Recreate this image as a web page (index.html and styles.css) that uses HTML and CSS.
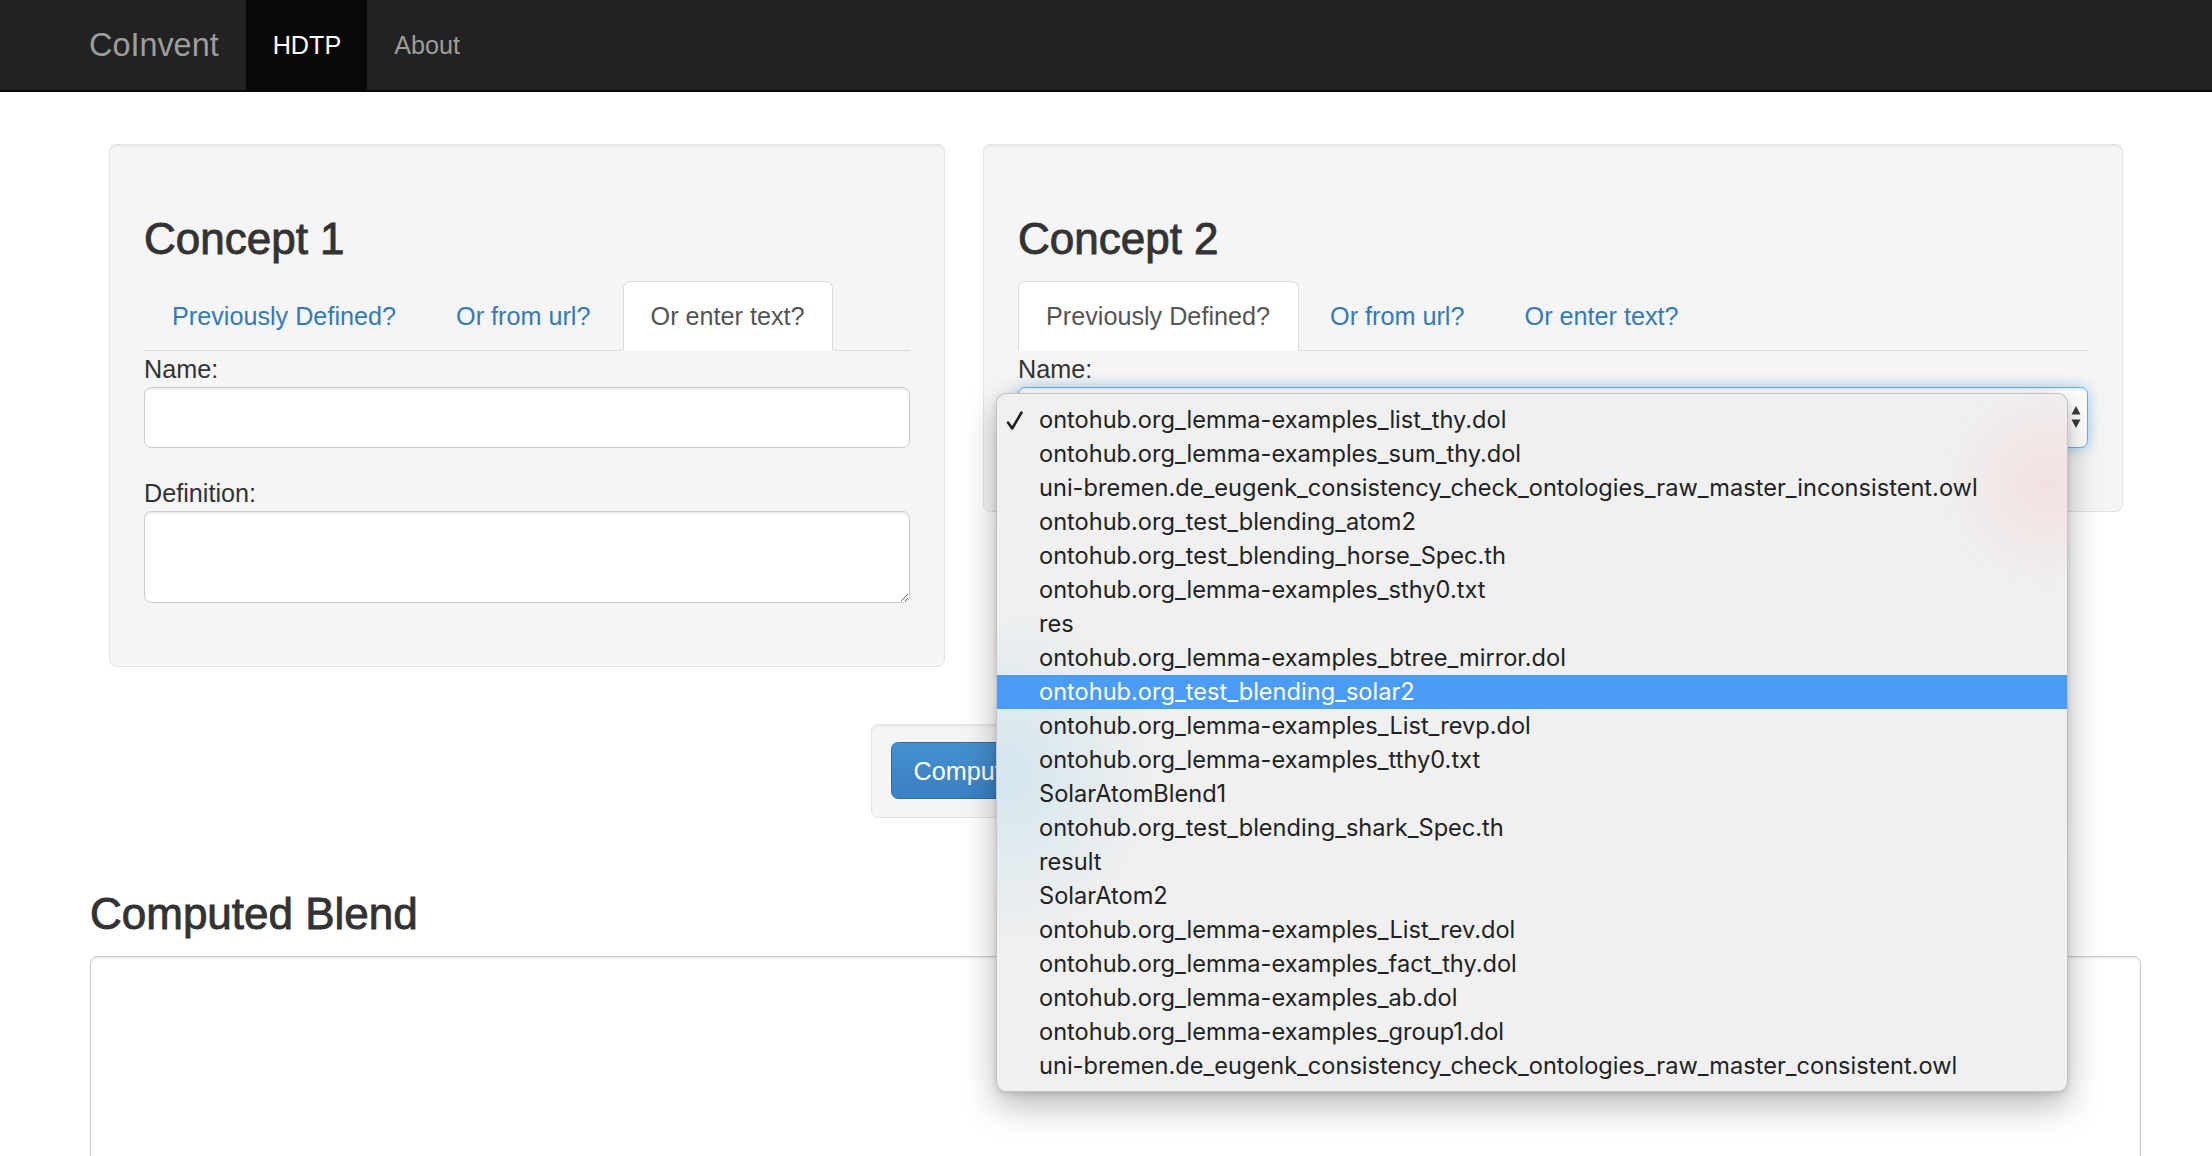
FILE: index.html
```
<!DOCTYPE html>
<html lang="en">
<head>
<meta charset="utf-8">
<title>CoInvent - HDTP</title>
<link rel="stylesheet" href="styles.css">
</head>
<body>
<nav class="navbar">
  <div class="navbar-inner">
    <a class="brand" href="#">CoInvent</a>
    <ul class="nav">
      <li class="active"><a href="#">HDTP</a></li>
      <li><a href="#">About</a></li>
    </ul>
  </div>
</nav>

<main class="container">
  <div class="concepts">
    <section class="well concept concept-1">
      <h3 class="heading">Concept 1</h3>
      <ul class="tabs">
        <li><a href="#">Previously Defined?</a></li>
        <li><a href="#">Or from url?</a></li>
        <li class="active"><a href="#">Or enter text?</a></li>
      </ul>
      <div class="form-group">
        <label>Name:</label>
        <input class="form-control" type="text">
      </div>
      <div class="form-group">
        <label>Definition:</label>
        <textarea class="form-control textarea"></textarea>
      </div>
    </section>

    <section class="well concept concept-2">
      <h3 class="heading">Concept 2</h3>
      <ul class="tabs">
        <li class="active"><a href="#">Previously Defined?</a></li>
        <li><a href="#">Or from url?</a></li>
        <li><a href="#">Or enter text?</a></li>
      </ul>
      <div class="form-group">
        <label>Name:</label>
        <div class="form-control select-box focused">
          <svg class="select-arrows" width="10" height="24" viewBox="0 0 10 24"><path d="M5 1 L9.5 9.5 L0.5 9.5 Z M5 23 L9.5 14.5 L0.5 14.5 Z" fill="#3a3a3a"/></svg>
        </div>
      </div>
    </section>
  </div>

  <div class="compute-row">
    <div class="well compute-well">
      <button class="btn-primary" type="button">Compute Blend</button>
    </div>
  </div>

  <h3 class="heading blend-heading">Computed Blend</h3>
  <div class="result-box"></div>
</main>

<div class="select-menu">
  <div class="menu-item checked"><svg class="check" width="18" height="20" viewBox="0 0 18 20"><path d="M2 11.5 L6.2 17.5 L15.5 1.5" fill="none" stroke="#222" stroke-width="2.6" stroke-linecap="round" stroke-linejoin="round"/></svg>ontohub.org_lemma-examples_list_thy.dol</div>
  <div class="menu-item">ontohub.org_lemma-examples_sum_thy.dol</div>
  <div class="menu-item">uni-bremen.de_eugenk_consistency_check_ontologies_raw_master_inconsistent.owl</div>
  <div class="menu-item">ontohub.org_test_blending_atom2</div>
  <div class="menu-item">ontohub.org_test_blending_horse_Spec.th</div>
  <div class="menu-item">ontohub.org_lemma-examples_sthy0.txt</div>
  <div class="menu-item">res</div>
  <div class="menu-item">ontohub.org_lemma-examples_btree_mirror.dol</div>
  <div class="menu-item highlighted">ontohub.org_test_blending_solar2</div>
  <div class="menu-item">ontohub.org_lemma-examples_List_revp.dol</div>
  <div class="menu-item">ontohub.org_lemma-examples_tthy0.txt</div>
  <div class="menu-item">SolarAtomBlend1</div>
  <div class="menu-item">ontohub.org_test_blending_shark_Spec.th</div>
  <div class="menu-item">result</div>
  <div class="menu-item">SolarAtom2</div>
  <div class="menu-item">ontohub.org_lemma-examples_List_rev.dol</div>
  <div class="menu-item">ontohub.org_lemma-examples_fact_thy.dol</div>
  <div class="menu-item">ontohub.org_lemma-examples_ab.dol</div>
  <div class="menu-item">ontohub.org_lemma-examples_group1.dol</div>
  <div class="menu-item">uni-bremen.de_eugenk_consistency_check_ontologies_raw_master_consistent.owl</div>
</div>
</body>
</html>
```
FILE: styles.css
```
* {
  box-sizing: border-box;
}

html, body {
  margin: 0;
  padding: 0;
  background: #fff;
}

body {
  font-family: "Liberation Sans", Helvetica, Arial, sans-serif;
  font-size: 25.2px;
  line-height: 36px;
  color: #333;
  width: 2212px;
  height: 1156px;
  overflow: hidden;
  position: relative;
}

a {
  text-decoration: none;
}

/* ---------- navbar ---------- */
.navbar {
  height: 92px;
  background: #222;
  border-bottom: 2px solid #080808;
}

.navbar-inner {
  display: flex;
  align-items: stretch;
  height: 90px;
  padding-left: 62px;
}

.brand {
  display: block;
  padding: 27px 27px;
  font-size: 32.4px;
  line-height: 36px;
  color: #9d9d9d;
}

.nav {
  display: flex;
  list-style: none;
  margin: 0;
  padding: 0;
}

.nav li a {
  display: block;
  padding: 27px 26px 27px 27px;
  line-height: 36px;
  color: #9d9d9d;
}

.nav li.active a {
  background: #080808;
  color: #fff;
}

/* ---------- layout ---------- */
.container {
  padding: 52px 71px 0 90px;
}

.concepts {
  display: flex;
  align-items: flex-start;
  gap: 38px;
  padding-left: 19px;
}

.well {
  background: #f5f5f5;
  border: 1.8px solid #e3e3e3;
  border-radius: 7.2px;
  box-shadow: inset 0 1.8px 1.8px rgba(0, 0, 0, 0.05);
}

.concept {
  padding: 34px 34px 36px 34px;
}

.concept-1 {
  width: 836px;
}

.concept-2 {
  width: 1140px;
}

.heading {
  font-size: 44px;
  font-weight: 400;
  line-height: 48.4px;
  margin: 36px 0 18px 0;
  color: #333;
  -webkit-text-stroke: 0.9px #333;
}

/* ---------- tabs ---------- */
.tabs {
  display: flex;
  list-style: none;
  margin: 0;
  padding: 0;
  border-bottom: 1.8px solid #ddd;
}

.tabs li {
  margin-bottom: -1.8px;
  margin-right: 3.6px;
}

.tabs li a {
  display: block;
  padding: 16px 27.5px 16px 27px;
  line-height: 36px;
  border: 1.8px solid transparent;
  border-radius: 7.2px 7.2px 0 0;
  color: #337ab7;
}

.tabs li.active a {
  background: #fff;
  color: #555;
  border-color: #ddd;
  border-bottom-color: transparent;
}

/* ---------- forms ---------- */
.form-group {
  margin-bottom: 27px;
}

.form-group label {
  display: block;
  margin: 0;
  font-weight: 400;
  line-height: 36px;
  color: #333;
}

.form-control {
  display: block;
  width: 100%;
  height: 61.2px;
  padding: 10.8px 21.6px;
  font-family: inherit;
  font-size: 25.2px;
  line-height: 36px;
  color: #555;
  background: #fff;
  border: 1.8px solid #ccc;
  border-radius: 7.2px;
  box-shadow: inset 0 1.8px 1.8px rgba(0, 0, 0, 0.075);
  outline: none;
}

.textarea {
  height: 92px;
  resize: vertical;
}

.select-box {
  position: relative;
}

.select-box.focused {
  border-color: #66afe9;
  box-shadow: inset 0 1.8px 1.8px rgba(0, 0, 0, 0.075), 0 0 14px rgba(102, 175, 233, 0.6);
}

.select-arrows {
  position: absolute;
  right: 6px;
  top: 17px;
}

/* ---------- compute ---------- */
.compute-row {
  display: flex;
  padding-left: 781px;
  margin-top: 57px;
}

.compute-well {
  padding: 17.5px 19px;
}

.btn-primary {
  display: block;
  height: 57px;
  padding: 9px 21.6px;
  font-family: inherit;
  font-size: 25.2px;
  line-height: 36px;
  color: #fff;
  background: linear-gradient(#4590d0, #3a80c3);
  border: 1.8px solid #2e6da4;
  border-radius: 7.2px;
}

.blend-heading {
  margin-top: 72px;
  margin-bottom: 18px;
}

.result-box {
  height: 320px;
  background: #fff;
  border: 1.8px solid #ccc;
  border-radius: 7.2px;
  box-shadow: inset 0 1.8px 1.8px rgba(0, 0, 0, 0.075);
}

/* ---------- native select popup ---------- */
.select-menu {
  position: absolute;
  left: 996px;
  top: 393px;
  width: 1072px;
  padding: 8.5px 0;
  background:
    radial-gradient(ellipse 150px 170px at 10px 380px, rgba(170, 215, 235, 0.4), rgba(170, 215, 235, 0)),
    radial-gradient(ellipse 110px 110px at 1050px 90px, rgba(245, 205, 205, 0.45), rgba(245, 205, 205, 0)),
    #f0f0f0;
  border: 1px solid rgba(0, 0, 0, 0.18);
  border-radius: 10px;
  box-shadow: 0 14px 34px rgba(0, 0, 0, 0.28), 0 2px 6px rgba(0, 0, 0, 0.12);
  font-family: Inter, "Liberation Sans", Arial, sans-serif;
  font-size: 23.6px;
  color: #222;
  z-index: 10;
}

.menu-item {
  position: relative;
  height: 34px;
  line-height: 34px;
  padding-left: 42px;
  white-space: nowrap;
}

.menu-item.highlighted {
  background: #4a9cf7;
  color: #fff;
}

.check {
  position: absolute;
  left: 9px;
  top: 8px;
}
```
